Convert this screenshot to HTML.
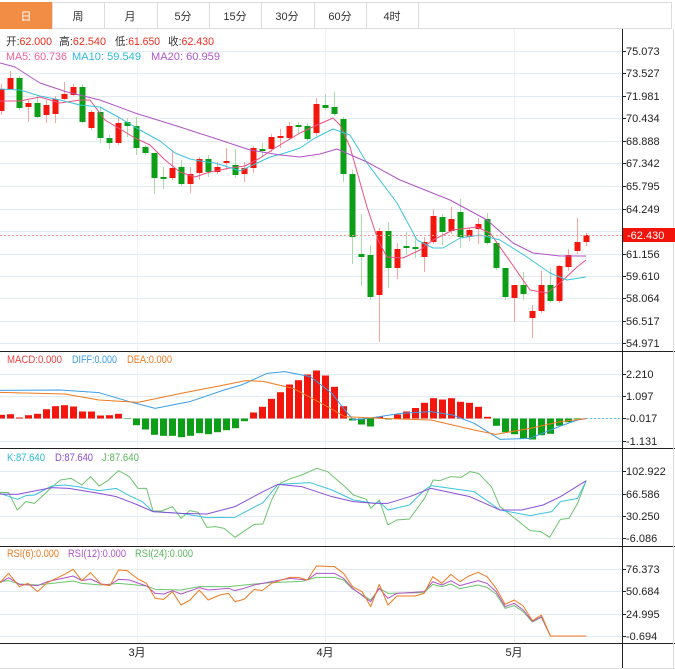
<!DOCTYPE html>
<html><head><meta charset="utf-8"><style>
html,body{margin:0;padding:0;background:#fff;width:675px;height:669px;overflow:hidden}
svg{display:block}
text{font-family:"Liberation Sans","Noto Sans CJK SC",sans-serif;font-size:11px}
</style></head><body>
<svg id="s" width="675" height="669" xmlns="http://www.w3.org/2000/svg">
<rect x="0" y="0" width="675" height="669" fill="#fff"/>
<rect x="0.5" y="2.5" width="671" height="26" fill="#fff" stroke="#dcdcdc"/>
<rect x="0" y="2" width="52" height="27" fill="#f28d45"/>
<g stroke="#dcdcdc"><line x1="52.5" y1="2" x2="52.5" y2="29"/><line x1="104.5" y1="2" x2="104.5" y2="29"/><line x1="157.5" y1="2" x2="157.5" y2="29"/><line x1="209.5" y1="2" x2="209.5" y2="29"/><line x1="261.5" y1="2" x2="261.5" y2="29"/><line x1="314.5" y1="2" x2="314.5" y2="29"/><line x1="366.5" y1="2" x2="366.5" y2="29"/><line x1="418.5" y1="2" x2="418.5" y2="29"/></g>
<g font-size="11" text-anchor="middle" fill="#333"><text x="26" y="20" fill="#fff">日</text><text x="78" y="20">周</text><text x="130" y="20">月</text><text x="183" y="20">5分</text><text x="235" y="20">15分</text><text x="287" y="20">30分</text><text x="340" y="20">60分</text><text x="392" y="20">4时</text></g>
<g id="grid"></g>
<g id="plot"></g>
<g stroke="#222" stroke-width="1">
<line x1="622.5" y1="29" x2="622.5" y2="669"/>
<line x1="0" y1="351.5" x2="675" y2="351.5"/>
<line x1="0" y1="448.5" x2="675" y2="448.5"/>
<line x1="0" y1="546.5" x2="675" y2="546.5"/>
<line x1="0" y1="643.5" x2="675" y2="643.5"/>
</g>
<line x1="673.5" y1="29" x2="673.5" y2="669" stroke="#ddd"/>
<line x1="0" y1="668.5" x2="675" y2="668.5" stroke="#ddd"/>
<g id="labels" fill="#222" font-size="10"></g>
<rect x="623" y="228" width="52" height="14" fill="#f2130b"/>
<text x="627" y="239" fill="#fff" font-size="10">-62.430</text>
<g font-size="11">
<text x="6" y="45" fill="#333" textLength="46" lengthAdjust="spacingAndGlyphs">开:<tspan fill="#ee2a1c">62.000</tspan></text>
<text x="59" y="45" fill="#333" textLength="47" lengthAdjust="spacingAndGlyphs">高:<tspan fill="#ee2a1c">62.540</tspan></text>
<text x="115" y="45" fill="#333" textLength="45" lengthAdjust="spacingAndGlyphs">低:<tspan fill="#ee2a1c">61.650</tspan></text>
<text x="168" y="45" fill="#333" textLength="46" lengthAdjust="spacingAndGlyphs">收:<tspan fill="#ee2a1c">62.430</tspan></text>
<text x="6" y="60" fill="#f0609a" textLength="61" lengthAdjust="spacingAndGlyphs">MA5: 60.736</text>
<text x="72" y="60" fill="#2bbcd8" textLength="69" lengthAdjust="spacingAndGlyphs">MA10: 59.549</text>
<text x="151" y="60" fill="#b155c8" textLength="69" lengthAdjust="spacingAndGlyphs">MA20: 60.959</text>
</g>
<g font-size="10">
<text x="7" y="363" fill="#f04040" textLength="55" lengthAdjust="spacingAndGlyphs">MACD:0.000</text>
<text x="72" y="363" fill="#3a9ee8" textLength="45" lengthAdjust="spacingAndGlyphs">DIFF:0.000</text>
<text x="127" y="363" fill="#f07a20" textLength="45" lengthAdjust="spacingAndGlyphs">DEA:0.000</text>
<text x="7" y="461" fill="#2bbcd8" textLength="38" lengthAdjust="spacingAndGlyphs">K:87.640</text>
<text x="55" y="461" fill="#8a4fd8" textLength="38" lengthAdjust="spacingAndGlyphs">D:87.640</text>
<text x="102" y="461" fill="#5cb85c" textLength="37" lengthAdjust="spacingAndGlyphs">J:87.640</text>
<text x="7" y="557" fill="#f07a20" textLength="52" lengthAdjust="spacingAndGlyphs">RSI(6):0.000</text>
<text x="68" y="557" fill="#b155c8" textLength="58" lengthAdjust="spacingAndGlyphs">RSI(12):0.000</text>
<text x="135" y="557" fill="#5cb85c" textLength="58" lengthAdjust="spacingAndGlyphs">RSI(24):0.000</text>
</g>
<g font-size="10" fill="#222" text-anchor="middle"><text x="137" y="656">3月</text><text x="325" y="656">4月</text><text x="514" y="656">5月</text></g>
</svg>
<script>
var NS="http://www.w3.org/2000/svg";
function el(p,t,a){var e=document.createElementNS(NS,t);for(var k in a)e.setAttribute(k,a[k]);p.appendChild(e);return e;}
var grid=document.getElementById('grid'),plot=document.getElementById('plot'),lab=document.getElementById('labels');
function hl(y){el(grid,'line',{x1:0,x2:622,y1:y+.5,y2:y+.5,stroke:'#e4ebf0'});}
var main=[["75.073",51],["73.527",73],["71.981",96],["70.434",118],["68.888",141],["67.342",163],["65.795",186],["64.249",209],["",231],["61.156",254],["59.610",276],["58.064",298],["56.517",321],["54.971",343]];
var macd=[["2.210",374],["1.097",396],["-0.017",418],["-1.131",441]];
var kdj=[["102.922",471],["66.586",494],["30.250",516],["-6.086",538]];
var rsi=[["76.373",569],["50.684",591],["24.995",614],["-0.694",636]];
[main,macd,kdj,rsi].forEach(function(a){a.forEach(function(r){hl(r[1]);if(r[0]){el(lab,'line',{x1:622,x2:626,y1:r[1]+.5,y2:r[1]+.5,stroke:'#222'});var t=el(lab,'text',{x:626,y:r[1]+4});t.textContent=r[0];}});});
[137,325,514].forEach(function(x){el(grid,'line',{x1:x+.5,x2:x+.5,y1:29,y2:643,stroke:'#eef2f5'});});
var C=[["r",89,111,84,115],["r",78,89,71,90],["g",78,108,76,110],["r",103,107,100,122],["g",103,117,95,118],["r",105,115,100,123],["r",99,114,96,123],["r",94,99,82,100],["r",87,95,84,96],["g",87,122,84,123],["r",112,128,110,130],["g",112,138,107,143],["g",138,143,135,149],["r",123,143,117,145],["g",122,126,118,137],["g",126,148,117,155],["g",147,153,145,155],["g",153,178,153,194],["g",177,179,167,189],["r",168,178,151,180],["g",167,184,160,186],["r",174,184,167,193],["r",159,173,157,180],["g",159,172,155,177],["r",167,172,162,174],["r",161,163,148,170],["g",165,175,149,178],["r",168,174,162,182],["r",148,168,146,173],["g",149,150,143,157],["r",137,149,134,152],["r",136,138,129,148],["r",126,138,122,140],["g",125,127,122,134],["g",126,139,123,141],["r",104,133,98,136],["g",105,108,94,110],["g",107,114,92,116],["g",119,174,117,182],["g",174,237,170,264],["g",254,257,214,286],["g",255,297,245,300],["r",231,295,228,342],["g",231,268,222,288],["r",249,268,243,279],["g",246,248,232,255],["g",247,249,238,258],["r",242,257,237,272],["r",216,242,209,244],["g",217,232,214,245],["r",219,231,207,234],["g",212,237,199,248],["r",230,237,228,241],["r",224,229,218,244],["g",219,243,213,245],["g",243,268,241,270],["g",268,297,268,300],["r",285,298,285,322],["g",285,294,272,300],["r",311,318,305,338],["r",285,311,271,313],["g",285,301,268,303],["r",266,301,265,303],["r",255,267,249,271],["r",242,251,218,254],["r",235,242,233,246]];
C.forEach(function(c,i){var x=1+9*i;var col=c[0]=="r"?"#f2160c":"#0b9e16";var wc=c[0]=="r"?"#f7a3a0":"#a9dca9";
el(plot,'line',{x1:x+.5,x2:x+.5,y1:c[3],y2:c[4],stroke:wc});
el(plot,'rect',{x:x-2.5,y:c[1],width:6,height:Math.max(2,c[2]-c[1]),fill:col});});
function pl(pts,col,w,dash){el(plot,'polyline',{points:pts.map(function(p){return p.join(',')}).join(' '),fill:'none',stroke:col,'stroke-width':w||1,'stroke-dasharray':dash||'none','stroke-linejoin':'round'});}
pl([[0,101],[20,101],[40,97],[60,103],[80,100],[90,100],[105,120],[120,129],[135,138],[150,145],[165,160],[180,172],[195,177],[210,172],[230,168],[245,166],[260,158],[275,148],[290,139],[300,133],[315,126],[333,118],[340,125],[350,147],[367,207],[378,240],[387,257],[403,258],[420,250],[433,240],[453,230],[477,227],[490,233],[507,257],[530,290],[547,293],[560,283],[577,267],[586,260]],"#ec4f86");
pl([[0,89],[20,90],[40,96],[60,100],[80,105],[100,107],[120,118],[140,130],[160,141],[175,153],[190,159],[200,161],[215,163],[225,166],[240,171],[255,164],[270,157],[285,153],[300,148],[315,138],[333,129],[350,135],[367,163],[397,203],[417,240],[433,248],[443,248],[460,238],[480,235],[500,240],[527,257],[550,273],[567,280],[586,277]],"#3cc4dc");
pl([[0,63],[15,67],[40,83],[67,92],[100,100],[135,113],[180,127],[220,140],[250,150],[280,155],[300,157],[320,154],[337,149],[367,162],[400,180],[450,200],[487,220],[513,243],[533,253],[560,256],[586,256]],"#b154c6");
el(plot,'line',{x1:0,x2:622,y1:235.5,y2:235.5,stroke:'#f29a96','stroke-dasharray':'2,2'});
var M=[3.7,4.3,1,3.3,4.7,9.3,12.3,13.3,12,7,7,3,3.3,4.7,-0.5,-6.7,-11,-16.3,-17.3,-17.3,-18.7,-17.3,-14.7,-15.7,-13.7,-11.7,-9.7,-2.7,6,11.7,19.7,26.3,34,38.3,44,48,43,31.7,12.3,-2,-6,-8,2,-1,4,7,10.5,15.7,20.3,19,20.3,16.7,15.7,11.7,1.7,-7.3,-13.7,-15.7,-20,-21,-16.7,-15.3,-7.3,-3.7,-0.7,0];
var z=418.5;
M.forEach(function(v,i){var x=1+9*i;if(Math.abs(v)<0.3)return;el(plot,'rect',{x:x-3,y:v>0?z-v:z,width:7,height:Math.abs(v),fill:v>0?'#f2160c':'#0b9e16'});});
function cv(a,y0){return a.map(function(p){return [p[0]/2.32,y0+p[1]/3];});}
pl(cv([[0,151],[140,150],[230,158],[300,185],[360,205],[440,185],[520,150],[560,135],[620,100],[660,95],[720,110],[770,160],[800,210],[820,240],[870,232],[930,220],[1000,215],[1050,225],[1100,250],[1160,298],[1230,295],[1300,258],[1340,240],[1360,236]],340),"#3a9ee8");
pl(cv([[0,157],[150,162],[230,180],[320,187],[420,160],[520,135],[570,122],[610,124],[680,145],[760,200],[800,230],[900,236],[1000,240],[1100,270],[1150,283],[1230,265],[1300,245],[1360,236]],340),"#f07a20");
el(plot,'line',{x1:586,x2:622,y1:418.5,y2:418.5,stroke:'#6bc2ea','stroke-dasharray':'2,2'});
pl(cv([[0,157],[20,158],[40,210],[60,185],[80,190],[120,142],[140,120],[165,115],[190,135],[210,110],[230,138],[250,122],[275,92],[300,110],[320,145],[340,145],[355,213],[375,213],[400,200],[420,235],[440,212],[460,217],[480,262],[500,260],[520,265],[545,292],[590,253],[610,252],[630,180],[650,130],[670,118],[700,105],[735,85],[760,95],[800,140],[820,165],[850,178],[860,205],[880,180],[900,255],[920,240],[950,237],[985,175],[1005,120],[1020,122],[1045,110],[1070,112],[1090,95],[1110,100],[1140,140],[1160,200],[1180,220],[1230,272],[1255,275],[1275,292],[1300,238],[1320,235],[1340,190],[1360,122]],440),"#6cc46c");
pl(cv([[0,160],[40,178],[60,167],[80,165],[120,138],[150,135],[180,140],[210,148],[230,152],[270,145],[300,167],[330,185],[355,215],[420,220],[480,233],[545,232],[610,188],[645,133],[720,128],[770,150],[820,180],[870,190],[880,185],[900,210],[950,195],[985,150],[1000,137],[1100,155],[1160,210],[1230,227],[1280,215],[1300,185],[1340,175],[1360,122]],440),"#3cc4dc");
pl(cv([[0,162],[40,163],[120,143],[160,145],[230,160],[270,170],[320,195],[355,215],[420,220],[480,222],[545,200],[610,155],[645,133],[700,140],[770,170],[820,185],[870,190],[900,190],[950,170],[1000,145],[1090,170],[1160,210],[1210,210],[1260,195],[1300,170],[1360,122]],440),"#8a4fd8");
pl(cv([[0,125],[20,122],[45,132],[87,135],[170,123],[190,130],[235,135],[275,130],[340,138],[360,148],[420,150],[462,140],[530,140],[590,132],[630,128],[700,124],[734,112],[776,112],[797,120],[818,147],[860,180],[880,145],[900,160],[984,158],[1004,133],[1025,140],[1046,132],[1067,146],[1109,135],[1130,142],[1151,162],[1172,205],[1193,197],[1214,215],[1235,246],[1256,232],[1277,288],[1360,288]],540),"#6cc46c");
pl(cv([[0,128],[20,113],[45,133],[87,137],[110,125],[170,108],[190,122],[210,117],[235,132],[255,135],[275,118],[300,120],[340,138],[360,160],[380,162],[400,152],[420,162],[462,143],[483,150],[530,145],[545,152],[566,145],[590,135],[630,125],[672,115],[713,120],[734,100],[776,100],[797,115],[818,145],[860,185],[880,145],[900,175],[921,160],[984,155],[1004,125],[1025,135],[1046,122],[1067,137],[1109,122],[1130,130],[1151,155],[1172,200],[1193,190],[1214,210],[1235,244],[1256,230],[1277,288],[1360,288]],540),"#b155c8");
pl(cv([[0,128],[20,100],[45,140],[65,130],[87,155],[110,128],[150,103],[170,88],[190,122],[210,98],[235,133],[255,137],[275,90],[295,92],[320,117],[340,130],[360,175],[380,178],[400,155],[420,195],[441,180],[462,150],[483,180],[510,165],[530,160],[545,185],[566,178],[590,148],[608,152],[630,130],[672,112],[692,112],[713,120],[734,78],[776,80],[797,100],[818,140],[840,155],[860,200],[880,133],[900,195],[921,168],[963,168],[984,160],[1004,110],[1025,130],[1046,103],[1067,125],[1088,108],[1109,97],[1130,110],[1151,145],[1172,193],[1193,180],[1214,198],[1235,242],[1256,225],[1277,288],[1360,288]],540),"#f07a20");
</script>
</body></html>
